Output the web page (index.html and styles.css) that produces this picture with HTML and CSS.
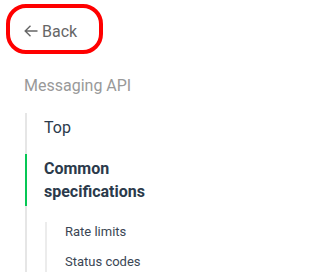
FILE: index.html
```html
<!DOCTYPE html>
<html>
<head>
<meta charset="utf-8">
<link rel="stylesheet" href="styles.css">
</head>
<body>
<div class="sidebar">
  <a class="back" href="#">
    <svg class="back-icon" width="14" height="12" viewBox="0 0 14 12"><path d="M13.5 6H1.2M6.5 0.8L1.2 6L6.5 11.2" fill="none" stroke="#666" stroke-width="1.4"/></svg>
    <span>Back</span>
  </a>
  <div class="section-title">Messaging API</div>
  <ul class="nav">
    <li class="nav-item">Top</li>
    <li class="nav-item active">Common specifications</li>
    <li class="nav-sub">
      <ul class="subnav">
        <li class="sub-item">Rate limits</li>
        <li class="sub-item">Status codes</li>
      </ul>
    </li>
  </ul>
</div>
</body>
</html>
```

FILE: styles.css
```css
html, body {
  margin: 0;
  padding: 0;
  background: #fff;
  overflow: hidden;
}
body {
  font-family: Roboto, "Liberation Sans", sans-serif;
}
.sidebar {
  width: 186px;
  padding: 4px 0 0 6px;
}
.back {
  display: flex;
  align-items: center;
  gap: 4px;
  box-sizing: border-box;
  width: 97px;
  height: 50px;
  border: 4px solid #ff0000;
  border-radius: 20px;
  padding: 4px 0 0 14px;
  color: #666;
  text-decoration: none;
  font-size: 16px;
}
.back-icon {
  display: block;
}
.section-title {
  margin: 20px 0 0 18px;
  font-size: 16px;
  line-height: 23px;
  color: #999;
}
.nav {
  list-style: none;
  margin: 16px 0 0 19px;
  padding: 0;
  border-left: 2px solid #e6e6e6;
}
.nav-item {
  font-size: 16px;
  line-height: 23px;
  padding: 3px 0 3px 17px;
  margin-bottom: 12px;
  color: #2b3a4b;
}
.nav-item.active {
  font-weight: 700;
  border-left: 2px solid #06c755;
  margin-left: -2px;
  margin-bottom: 0;
}
.nav-sub {
  padding: 16px 0 0 18px;
}
.subnav {
  list-style: none;
  margin: 0;
  padding: 0;
  border-left: 2px solid #ececec;
}
.sub-item {
  font-size: 13px;
  line-height: 20px;
  padding-left: 18px;
  margin-bottom: 10px;
  color: #3a4654;
}
```
